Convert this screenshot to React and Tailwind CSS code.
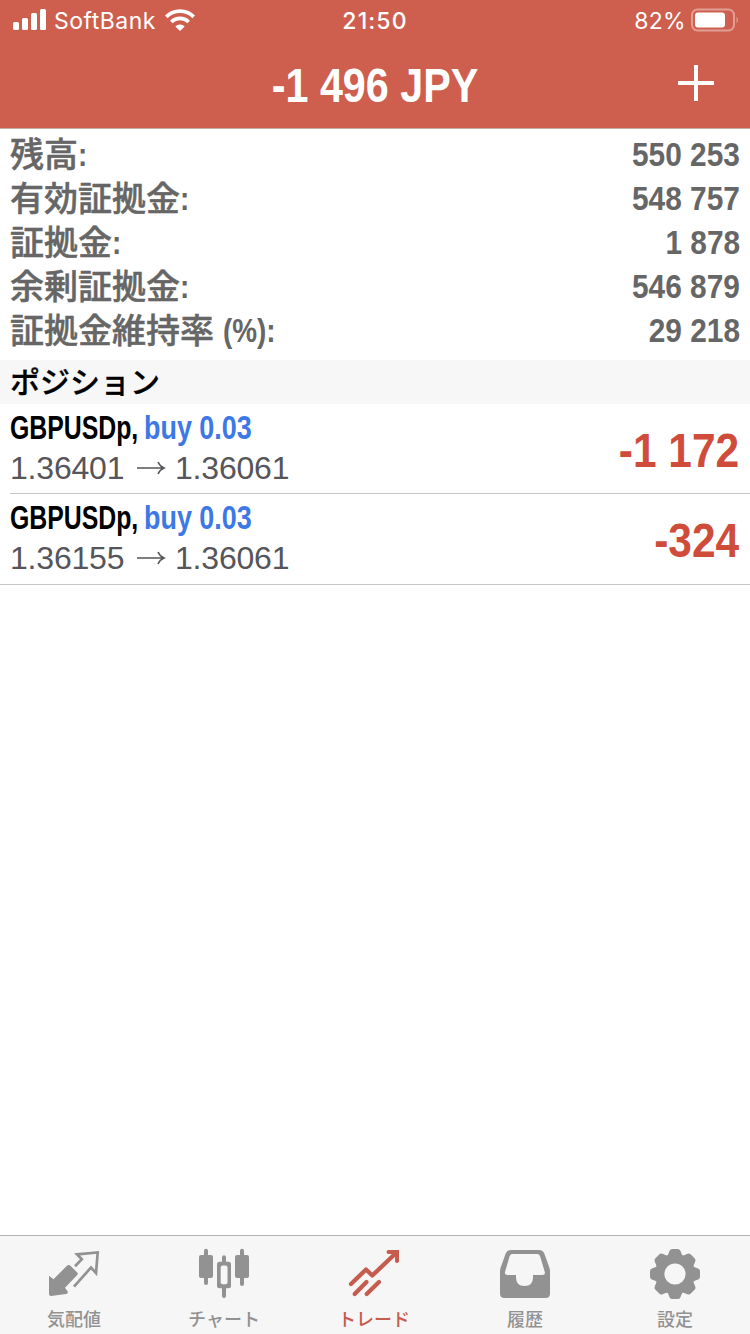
import React from "react";
import clsx from "clsx";

const summary = [
  { label: "残高", value: "550 253" },
  { label: "有効証拠金", value: "548 757" },
  { label: "証拠金", value: "1 878" },
  { label: "余剰証拠金", value: "546 879" },
  { label: "証拠金維持率", suffix: "(%)", value: "29 218" },
];

const positions = [
  {
    symbol: "GBPUSDp,",
    side: "buy 0.03",
    open: "1.36401",
    current: "1.36061",
    profit: "-1 172",
  },
  {
    symbol: "GBPUSDp,",
    side: "buy 0.03",
    open: "1.36155",
    current: "1.36061",
    profit: "-324",
  },
];

const QuotesIcon = () => (
  <svg width="52" height="52" viewBox="0 0 52 52">
    <path
      d="M1 27.700l4.500 3.600L18.700 18q2.200-2 4 0l6.500 6.500q1.200 1.300 0 2.600L17 39.700l2.700 3.800q.5 2.300-1.500 2.500L3 48q-2 0-2-2z"
      fill="#929292"
    />
    <path
      d="M27 18.300l6.800-7L29 6.300l20.700-1.800-1.700 20.500-5-5.500-17 19.200"
      fill="none"
      stroke="#929292"
      strokeWidth="2.700"
    />
  </svg>
);

const ChartIcon = () => (
  <svg width="52" height="52" viewBox="0 0 52 52" fill="#929292">
    <rect x="1" y="7" width="14" height="23" rx="2" />
    <rect x="6" y="0.700" width="4" height="36.300" rx="2" />
    <rect x="37" y="7" width="14" height="23" rx="2" />
    <rect x="42" y="0.700" width="4" height="37.300" rx="2" />
    <rect x="24" y="7.300" width="4" height="42.700" rx="2" />
    <rect x="19" y="13.700" width="14" height="26.600" rx="2.500" />
    <rect x="22.700" y="17.500" width="6.800" height="18.800" rx="2" fill="#f6f6f6" />
  </svg>
);

const TradeIcon = () => (
  <svg
    width="52"
    height="52"
    viewBox="0 0 52 52"
    fill="none"
    stroke="#c65c4e"
    strokeWidth="4.300"
    strokeLinecap="round"
    strokeLinejoin="round"
  >
    <path d="M3 36L18 21.500l6.300 6L48 5" />
    <path d="M40.500 4H49v9" strokeWidth="4" strokeLinejoin="miter" />
    <path d="M18.500 34L6.700 46M31 34L18.700 46" />
  </svg>
);

const HistoryIcon = () => (
  <svg width="52" height="52" viewBox="0 -1 52 52">
    <path
      fillRule="evenodd"
      fill="#929292"
      d="M12 1h28q4 0 5.300 3.500L50.500 19q.5 1.500.5 3.500v22q0 4.500-4.500 4.500h-41Q1 49 1 44.500v-22Q1 20.500 1.500 19L6.700 4.500Q8 1 12 1zM13.500 5q-2 0-2.800 2L6 23q-.6 3 2.500 3H17v2.500q0 8.500 8.500 8.500t8.500-8.500V26h9.500q3 0 2.300-3L41 7q-.8-2-2.800-2z"
    />
  </svg>
);

const SettingsIcon = () => (
  <svg width="52" height="52" viewBox="-26 -26 52 52">
    <g fill="#929292">
      {[0, 45, 90, 135, 180, 225, 270, 315].map((angle) => (
        <path
          key={angle}
          transform={`rotate(${angle})`}
          d="M-9.500-17Q-7-18-5.800-22.500-5-25-3-25H3Q5-25 5.800-22.500 7-18 9.500-17L7-10H-7z"
        />
      ))}
      <circle r="19" />
    </g>
    <circle r="10.600" fill="#f6f6f6" />
  </svg>
);

const tabs = [
  { label: "気配値", Icon: QuotesIcon, pad: "pr-[2px]" },
  { label: "チャート", Icon: ChartIcon, pad: "pr-[2px]" },
  { label: "トレード", Icon: TradeIcon, pad: "pr-[2px]", active: true },
  { label: "履歴", Icon: HistoryIcon },
  { label: "設定", Icon: SettingsIcon },
];

const StatusBar = () => (
  <div className="h-10 grid grid-cols-3 items-center font-['Inter',sans-serif] text-[23px] leading-none">
    <div className="flex items-center pl-[13px]">
      <svg width="33" height="22" viewBox="0 0 33 22" fill="#fff">
        <rect x="0" y="13" width="6" height="8" rx="1.500" />
        <rect x="9" y="9" width="6" height="12" rx="1.500" />
        <rect x="18" y="4" width="6" height="17" rx="1.500" />
        <rect x="27" y="0" width="6" height="21" rx="1.500" />
      </svg>
      <span className="ml-2 mt-[2px] tracking-[0.5px]">SoftBank</span>
      <svg className="ml-[9px]" width="30" height="22" viewBox="0 0 30 22" fill="none" stroke="#fff">
        <path d="M1.300 7.800a19.500 19.500 0 0 1 27.400 0" strokeWidth="3.800" />
        <path d="M6.300 13a12.300 12.300 0 0 1 17.400 0" strokeWidth="3.600" />
        <path d="M10.300 17.500a6.600 6.600 0 0 1 9.400 0L15 22z" fill="#fff" stroke="none" />
      </svg>
    </div>
    <div className="mt-[2px] text-center font-medium tracking-[1.100px]">21:50</div>
    <div className="flex items-center justify-end pr-[11px]">
      <span className="mt-[2px] tracking-[0.3px]">82%</span>
      <svg className="ml-[5px]" width="48" height="24" viewBox="0 0 48 24">
        <rect x="1" y="1.500" width="42" height="21" rx="5.500" fill="none" stroke="#fff" strokeOpacity="0.400" strokeWidth="2" />
        <rect x="4" y="4.500" width="30" height="15" rx="3" fill="#fff" />
        <path d="M45.500 8.500q3 3.500 0 7z" fill="#fff" fillOpacity="0.400" />
      </svg>
    </div>
  </div>
);

const App = () => {
  return (
    <div className="flex flex-col w-[750px] h-[1334px] bg-white overflow-hidden font-['Liberation_Sans','Noto_Sans_CJK_JP',sans-serif]">
      <header className="h-[129px] bg-[#ce5f4e] text-white border-b border-[#c9aaa2]">
        <StatusBar />
        <div className="h-[88px] grid grid-cols-[100px_1fr_100px] items-center">
          <div />
          <h1 className="pt-[4px] text-center text-[48px] leading-[84px] font-bold whitespace-nowrap scale-x-[0.86]">
            -1 496 JPY
          </h1>
          <svg className="ml-[28px] -mt-[2px]" width="36" height="36" viewBox="0 0 36 36">
            <path d="M18 0v36M0 18h36" stroke="#fff" strokeWidth="4" />
          </svg>
        </div>
      </header>

      <section className="h-[231px] pt-[3px] px-[10px] text-[#666]">
        {summary.map((row) => (
          <div key={row.label} className="h-11 flex justify-between text-[34px] leading-[44px] whitespace-nowrap">
            <div className="flex">
              <span className="leading-[42px] font-medium font-['Noto_Sans_CJK_JP',sans-serif] [-webkit-text-stroke:0.5px]">
                {row.label}
              </span>
              <span className={clsx("font-bold origin-left scale-x-[0.82]", row.suffix && "ml-[9px]")}>
                {row.suffix}:
              </span>
            </div>
            <span className="font-bold origin-right scale-x-[0.878]">{row.value}</span>
          </div>
        ))}
      </section>

      <h2 className="h-11 pl-[10px] bg-[#f7f7f7] text-black text-[30px] leading-[40px] font-medium font-['Noto_Sans_CJK_JP',sans-serif] [-webkit-text-stroke:0.3px]">
        ポジション
      </h2>

      <ul>
        {positions.map((p, i) => (
          <li
            key={i}
            className={clsx(
              "flex justify-between pr-[10px] border-b border-[#c8c7cc]",
              i < positions.length - 1 ? "h-[90px] ml-[10px]" : "h-[91px] pl-[10px]"
            )}
          >
            <div className="whitespace-nowrap">
              <div className="h-[44px] flex text-[34px] leading-[46px] font-bold">
                <span className="w-[134px] text-black origin-left scale-x-[0.73]">{p.symbol}</span>
                <span className="text-[#3c78e6] origin-left scale-x-[0.792]">{p.side}</span>
              </div>
              <div className="h-[40px] flex items-center text-[32px] leading-[40px] tracking-[-0.2px] text-[#55555a]">
                <span className="w-[126px]">{p.open}</span>
                <svg width="30" height="14" viewBox="0 0 30 14" fill="none" stroke="#55555a" strokeWidth="1.600">
                  <path d="M1 7h27M22 1q2 4.500 6 6-4 1.500-6 6" />
                </svg>
                <span className="ml-[9px]">{p.current}</span>
              </div>
            </div>
            <span className="pr-[1px] text-[48px] leading-[94px] font-bold text-[#d04c3a] whitespace-nowrap origin-right scale-x-[0.885]">
              {p.profit}
            </span>
          </li>
        ))}
      </ul>

      <nav className="mt-auto h-[99px] grid grid-cols-5 bg-[#f6f6f6] border-t border-[#b2b2b2]">
        {tabs.map(({ label, Icon, pad, active }) => (
          <div
            key={label}
            className={clsx(
              "flex flex-col items-center pt-[12px] font-['Noto_Sans_CJK_JP',sans-serif] font-medium text-[18px] leading-[36px] whitespace-nowrap",
              pad,
              active ? "text-[#c65c4e]" : "text-[#929292]"
            )}
          >
            <Icon />
            <span>{label}</span>
          </div>
        ))}
      </nav>
    </div>
  );
};

export default App;
